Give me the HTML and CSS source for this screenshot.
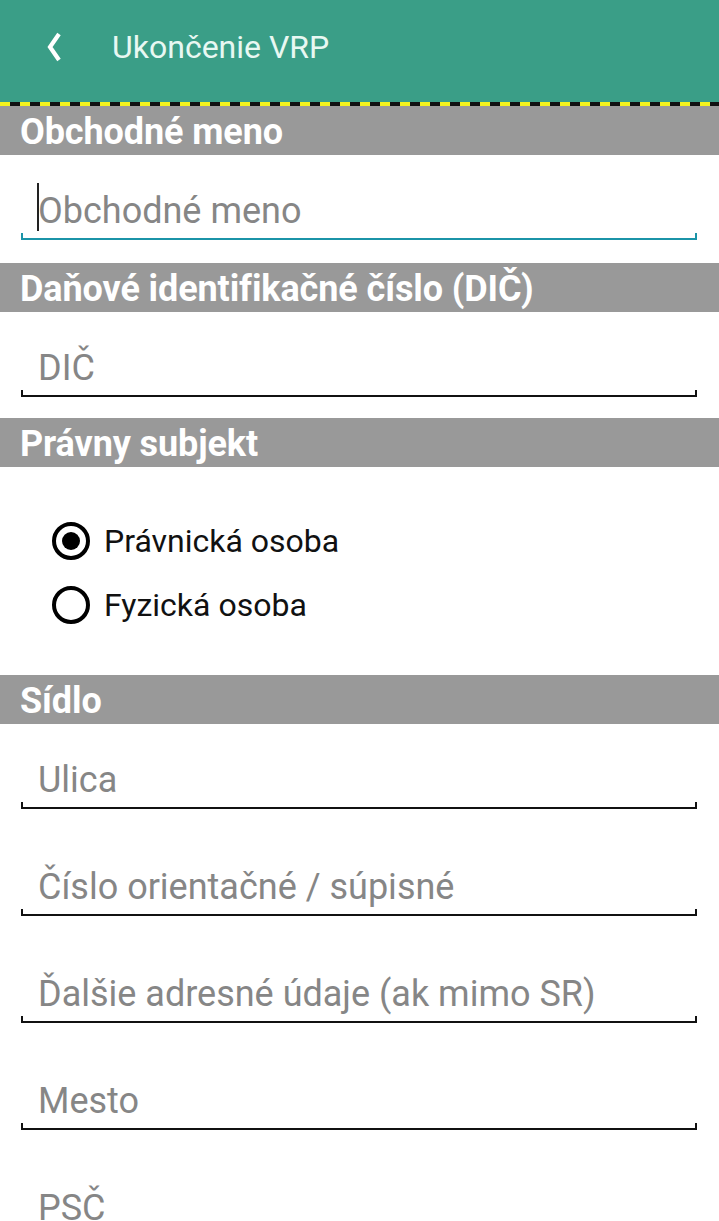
FILE: index.html
```html
<!DOCTYPE html>
<html lang="sk">
<head>
<meta charset="utf-8">
<title>Ukončenie VRP</title>
<link rel="stylesheet" href="styles.css">
</head>
<body>
<header class="appbar">
  <svg class="back" viewBox="0 0 18 30" width="18" height="30"><path d="M14 2 L5 15 L14 28" fill="none" stroke="#ffffff" stroke-width="4.2"/></svg>
  <span class="title">Ukončenie VRP</span>
</header>
<div class="stripe"></div>

<div class="section">Obchodné meno</div>
<div class="field first">
  <div class="field-text"><span class="cursor"></span>Obchodné meno</div>
  <div class="line focused"></div>
</div>

<div class="section">Daňové identifikačné číslo (DIČ)</div>
<div class="field second">
  <div class="field-text">DIČ</div>
  <div class="line"></div>
</div>

<div class="section">Právny subjekt</div>
<div class="radios">
  <div class="radio"><span class="circle checked"></span><span class="rlabel">Právnická osoba</span></div>
  <div class="radio"><span class="circle"></span><span class="rlabel">Fyzická osoba</span></div>
</div>

<div class="section">Sídlo</div>
<div class="field">
  <div class="field-text">Ulica</div>
  <div class="line"></div>
</div>
<div class="field">
  <div class="field-text">Číslo orientačné / súpisné</div>
  <div class="line"></div>
</div>
<div class="field">
  <div class="field-text">Ďalšie adresné údaje (ak mimo SR)</div>
  <div class="line"></div>
</div>
<div class="field">
  <div class="field-text">Mesto</div>
  <div class="line"></div>
</div>
<div class="field">
  <div class="field-text">PSČ</div>
  <div class="line"></div>
</div>
</body>
</html>
```

FILE: styles.css
```css
html, body {
  margin: 0;
  padding: 0;
  background: #ffffff;
  font-family: Roboto, "Noto Sans", sans-serif;
}
body {
  height: 1221px;
  overflow: hidden;
}
.appbar {
  height: 102px;
  background: #3a9e87;
  display: flex;
  align-items: center;
  box-sizing: border-box;
  padding-left: 45px;
}
.back {
  display: block;
  margin-right: 49px;
  margin-top: -8px;
}
.title {
  color: #e8f8f2;
  font-size: 32px;
  margin-top: -8px;
}
.stripe {
  height: 4px;
  background: repeating-linear-gradient(90deg, #f3f31c 0 10px, #111111 10px 20px);
}
.section {
  height: 49px;
  background: #999999;
  color: #ffffff;
  font-weight: 700;
  font-size: 36px;
  line-height: 53px;
  padding-left: 20px;
  letter-spacing: -0.1px;
  white-space: nowrap;
  overflow: hidden;
}
.field {
  height: 107px;
  box-sizing: border-box;
  padding: 36px 22px 0 21px;
}
.field.first {
  height: 108px;
}
.field.second {
  height: 106px;
}
.field-text {
  position: relative;
  height: 40px;
  line-height: 40px;
  font-size: 36px;
  color: #868686;
  padding-left: 17px;
  white-space: nowrap;
}
.cursor {
  position: absolute;
  left: 16px;
  top: -8px;
  width: 2px;
  height: 48px;
  background: #222222;
}
.line {
  margin-top: 2px;
  height: 5px;
  border: 2px solid #111111;
  border-top: 0;
}
.line.focused {
  border-color: #1b94a8;
}
.radios {
  height: 208px;
  box-sizing: border-box;
  padding: 55px 0 0 52px;
  display: flex;
  flex-direction: column;
  gap: 26px;
}
.radio {
  display: flex;
  align-items: center;
  height: 38px;
}
.circle {
  width: 38px;
  height: 38px;
  box-sizing: border-box;
  border: 4px solid #000000;
  border-radius: 50%;
  position: relative;
  margin-right: 14px;
}
.circle.checked::after {
  content: "";
  position: absolute;
  left: 6px;
  top: 6px;
  width: 18px;
  height: 18px;
  border-radius: 50%;
  background: #000000;
}
.rlabel {
  font-size: 32px;
  color: #111111;
}
```
